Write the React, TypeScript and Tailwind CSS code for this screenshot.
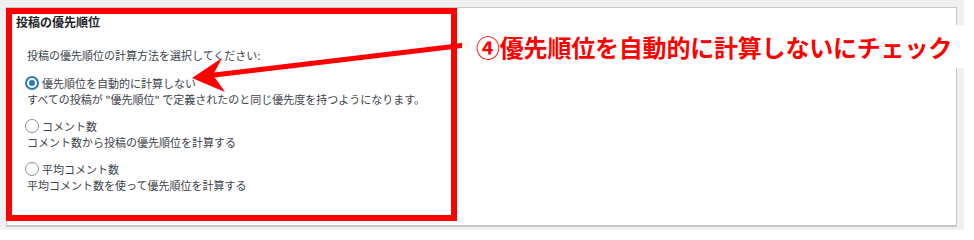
const jp = { fontFamily: '"Noto Sans CJK JP", "Liberation Sans", sans-serif' };

type Option = { label: string; desc: string; checked?: boolean };

const options: Option[] = [
  {
    label: "優先順位を自動的に計算しない",
    desc: 'すべての投稿が "優先順位" で定義されたのと同じ優先度を持つようになります。',
    checked: true,
  },
  { label: "コメント数", desc: "コメント数から投稿の優先順位を計算する" },
  { label: "平均コメント数", desc: "平均コメント数を使って優先順位を計算する" },
];

function Radio({ checked }: { checked?: boolean }) {
  if (checked) {
    return (
      <span className="flex h-[14px] w-[14px] shrink-0 items-center justify-center rounded-full border-2 border-[#2a7ab8] bg-white">
        <span className="h-[6px] w-[6px] rounded-full bg-[#2a7ab8]" />
      </span>
    );
  }
  return <span className="h-[14px] w-[14px] shrink-0 rounded-full border border-[#8c8f94] bg-white" />;
}

export default function App() {
  return (
    <div className="relative flex h-[230px] w-[974px] overflow-hidden bg-white" style={jp}>
      <div className="h-[230px] w-[964px] bg-[#f0f0f0] pl-[6px] pt-[7px]">
        <div className="h-[220px] w-[951px] border border-b-2 border-[#c8c8c8] bg-white">
          <div className="-ml-px h-[213px] w-[451px] border-[6px] border-[#ff0000] pl-[15px] text-[11px] leading-[16px] text-[#3c434a]">
            <h2 className="-ml-[11px] text-[12px] font-bold leading-[16px] text-[#1d2327]">投稿の優先順位</h2>
            <p className="mt-[17px]">投稿の優先順位の計算方法を選択してください:</p>
            <div className="mt-[11px] flex flex-col gap-[10px]">
              {options.map((o) => (
                <div key={o.label}>
                  <label className="-ml-[2px] flex h-[17px] items-center gap-[3px]">
                    <Radio checked={o.checked} />
                    <span>{o.label}</span>
                  </label>
                  <p>{o.desc}</p>
                </div>
              ))}
            </div>
          </div>
        </div>
      </div>

      <svg className="absolute left-0 top-0" width="974" height="230" viewBox="0 0 974 230">
        <line x1="470" y1="44.5" x2="206" y2="76" stroke="#ff0000" strokeWidth="5" />
        <polygon points="192,78 222,58 213,75 225,92" fill="#ff0000" />
      </svg>

      <div className="absolute left-[462px] top-[25px] flex h-[43px] w-[512px] items-center bg-white/95 pl-[14px]">
        <span className="text-[24px] font-bold leading-none tracking-[-0.2px] text-[#ff0000]">④優先順位を自動的に計算しないにチェック</span>
      </div>
    </div>
  );
}
